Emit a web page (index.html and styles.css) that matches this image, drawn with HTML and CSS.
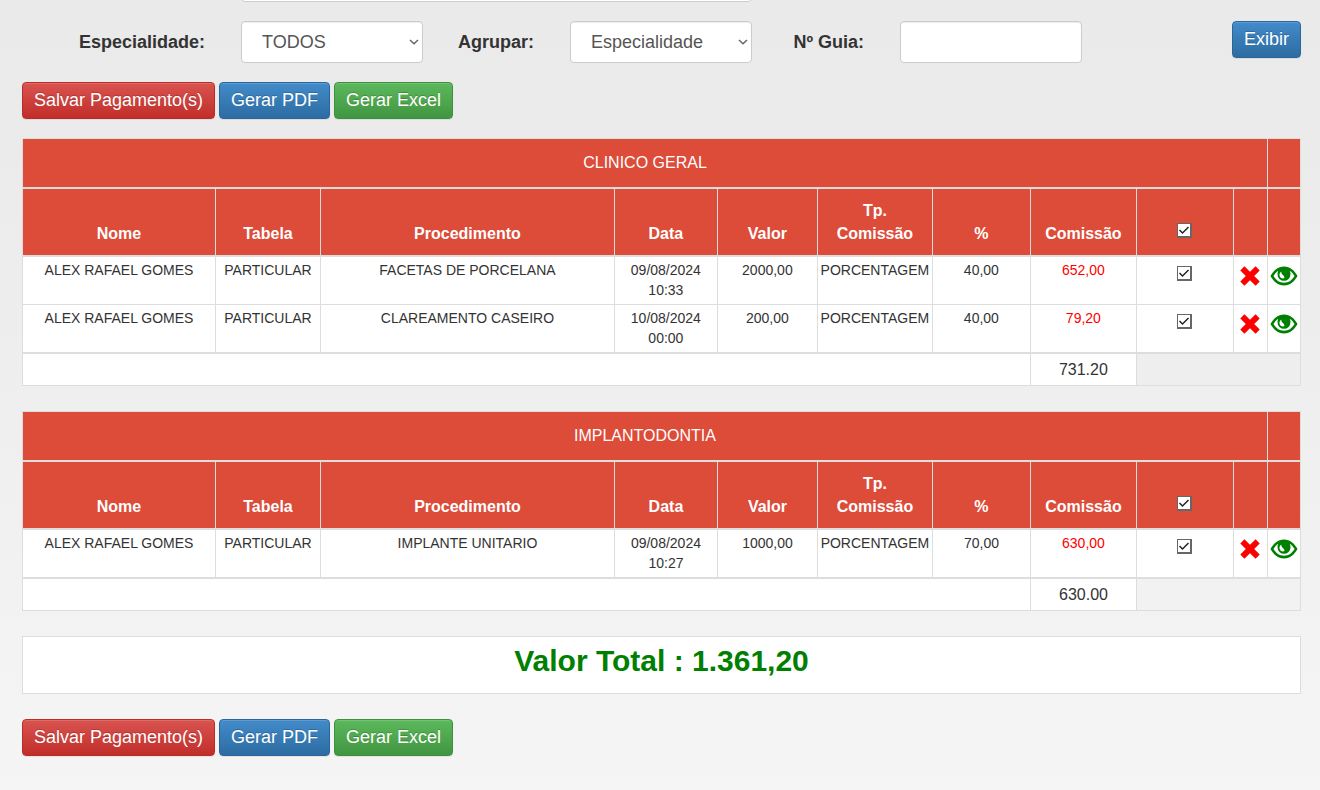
FILE: index.html
```
<!DOCTYPE html>
<html lang="pt-BR">
<head>
<meta charset="utf-8">
<title>Pagamento de Comissões</title>
<link rel="stylesheet" href="styles.css">
</head>
<body>
<svg class="sprite" aria-hidden="true">
  <symbol id="icon-remove" viewBox="0 0 20 20">
    <path d="M4.400.3 10 5.800 15.600.3 19.700 4.400 14.200 10 19.700 15.600 15.600 19.700 10 14.200 4.400 19.700.3 15.600 5.800 10 .3 4.400Z"/>
  </symbol>
  <symbol id="icon-eye" viewBox="0 0 28 20">
    <path fill-rule="evenodd" d="M14 .5C20 .5 24.500 4.500 27.500 10 24.500 15.500 20 19.500 14 19.500S3.500 15.500.5 10C3.500 4.500 8 .5 14 .5ZM8.300 4.800C6.300 6 4.800 7.800 3.500 10c2.500 4.200 6 6.700 10.500 6.700S22 14.200 24.500 10c-1.300-2.200-2.800-4-4.800-5.200a6.500 6.500 0 0 1 .8 3.500 6.500 6.500 0 0 1-13 0 6.500 6.500 0 0 1 .8-3.500ZM11.300 5.500c-2.100 1.500-2.400 4.200-.8 5.900 1 1.100 2.600 1.400 3.900.7.200-1.300-.4-2.200-1.500-3.100-1.200-.9-1.700-1.900-1.600-3.500Z"/>
  </symbol>
</svg>

<main class="page">
  <form class="filters">
    <input class="field field-wide" type="text" aria-label="Profissional">

    <label class="filter-label filter-first" for="especialidade">Especialidade:</label>
    <select class="field" id="especialidade"><option>TODOS</option></select>

    <label class="filter-label" for="agrupar">Agrupar:</label>
    <select class="field" id="agrupar"><option>Especialidade</option></select>

    <label class="filter-label" for="guia">Nº Guia:</label>
    <input class="field" type="text" id="guia">

    <button class="btn btn-primary btn-show" type="button">Exibir</button>
  </form>

  <div class="actions">
    <button class="btn btn-danger" type="button">Salvar Pagamento(s)</button>
    <button class="btn btn-primary" type="button">Gerar PDF</button>
    <button class="btn btn-success" type="button">Gerar Excel</button>
  </div>

  <table class="grid">
    <colgroup>
      <col class="c-name"><col class="c-plan"><col><col class="c-date"><col class="c-value"><col class="c-type"><col class="c-percent"><col class="c-fee"><col class="c-check"><col class="c-remove"><col class="c-view">
    </colgroup>
    <thead>
      <tr class="group"><td colspan="10">CLINICO GERAL</td><td></td></tr>
      <tr class="heads">
        <th>Nome</th><th>Tabela</th><th>Procedimento</th><th>Data</th><th>Valor</th><th>Tp. Comissão</th><th>%</th><th>Comissão</th>
        <th><input class="check" type="checkbox" checked aria-label="Selecionar todos"></th><th></th><th></th>
      </tr>
    </thead>
    <tbody>
      <tr>
        <td>ALEX RAFAEL GOMES</td><td>PARTICULAR</td><td>FACETAS DE PORCELANA</td><td>09/08/2024 10:33</td><td>2000,00</td><td>PORCENTAGEM</td><td>40,00</td><td class="fee">652,00</td>
        <td><input class="check" type="checkbox" checked aria-label="Selecionar"></td>
        <td><button class="icon icon-remove" type="button" aria-label="Excluir"><svg width="20" height="20"><use href="#icon-remove"/></svg></button></td>
        <td><button class="icon icon-view" type="button" aria-label="Visualizar"><svg width="28" height="20"><use href="#icon-eye"/></svg></button></td>
      </tr>
      <tr>
        <td>ALEX RAFAEL GOMES</td><td>PARTICULAR</td><td>CLAREAMENTO CASEIRO</td><td>10/08/2024 00:00</td><td>200,00</td><td>PORCENTAGEM</td><td>40,00</td><td class="fee">79,20</td>
        <td><input class="check" type="checkbox" checked aria-label="Selecionar"></td>
        <td><button class="icon icon-remove" type="button" aria-label="Excluir"><svg width="20" height="20"><use href="#icon-remove"/></svg></button></td>
        <td><button class="icon icon-view" type="button" aria-label="Visualizar"><svg width="28" height="20"><use href="#icon-eye"/></svg></button></td>
      </tr>
    </tbody>
    <tfoot>
      <tr><td colspan="7"></td><td>731.20</td><td class="blank" colspan="3"></td></tr>
    </tfoot>
  </table>

  <table class="grid">
    <colgroup>
      <col class="c-name"><col class="c-plan"><col><col class="c-date"><col class="c-value"><col class="c-type"><col class="c-percent"><col class="c-fee"><col class="c-check"><col class="c-remove"><col class="c-view">
    </colgroup>
    <thead>
      <tr class="group"><td colspan="10">IMPLANTODONTIA</td><td></td></tr>
      <tr class="heads">
        <th>Nome</th><th>Tabela</th><th>Procedimento</th><th>Data</th><th>Valor</th><th>Tp. Comissão</th><th>%</th><th>Comissão</th>
        <th><input class="check" type="checkbox" checked aria-label="Selecionar todos"></th><th></th><th></th>
      </tr>
    </thead>
    <tbody>
      <tr>
        <td>ALEX RAFAEL GOMES</td><td>PARTICULAR</td><td>IMPLANTE UNITARIO</td><td>09/08/2024 10:27</td><td>1000,00</td><td>PORCENTAGEM</td><td>70,00</td><td class="fee">630,00</td>
        <td><input class="check" type="checkbox" checked aria-label="Selecionar"></td>
        <td><button class="icon icon-remove" type="button" aria-label="Excluir"><svg width="20" height="20"><use href="#icon-remove"/></svg></button></td>
        <td><button class="icon icon-view" type="button" aria-label="Visualizar"><svg width="28" height="20"><use href="#icon-eye"/></svg></button></td>
      </tr>
    </tbody>
    <tfoot>
      <tr><td colspan="7"></td><td>630.00</td><td class="blank" colspan="3"></td></tr>
    </tfoot>
  </table>

  <p class="grand-total">Valor Total : 1.361,20</p>

  <div class="actions">
    <button class="btn btn-danger" type="button">Salvar Pagamento(s)</button>
    <button class="btn btn-primary" type="button">Gerar PDF</button>
    <button class="btn btn-success" type="button">Gerar Excel</button>
  </div>
</main>
</body>
</html>
```

FILE: styles.css
```
* { box-sizing: border-box; }

html { min-height: 100%; background: linear-gradient(#eaeaea, #ebebeb 20%, #f5f5f5); }

body {
  margin: 0;
  font-family: "Liberation Sans", Arial, sans-serif;
  font-size: 14px;
  color: #333;
}

.sprite { display: none; }

.page { padding: 0 19px 15px 22px; overflow: hidden; }

/* Filters */
.filters {
  display: grid;
  grid-template-columns: 219fr 182fr 147fr 182fr 148fr 182fr 219fr;
  row-gap: 19px;
  margin-top: -40px;
}

.field {
  width: 100%;
  height: 42px;
  padding: 6px 12px;
  font-family: inherit;
  font-size: 18px;
  color: #555;
  background-color: #fff;
  border: 1px solid #ccc;
  border-radius: 4px;
  box-shadow: inset 0 1px 1px rgba(0, 0, 0, .075);
}

select.field {
  appearance: none;
  padding: 6px 20px;
  background-image: url("data:image/svg+xml,%3Csvg xmlns='http://www.w3.org/2000/svg' viewBox='0 0 10 6'%3E%3Cpath d='M1 1 5 4.800 9 1' fill='none' stroke='%23666' stroke-width='1.500'/%3E%3C/svg%3E");
  background-repeat: no-repeat;
  background-position: right 3px center;
  background-size: 10px 6px;
}

.field-wide { grid-column: 2 / 5; }

.filter-label {
  align-self: center;
  padding-right: 36px;
  text-align: right;
  font-size: 18px;
  font-weight: bold;
}

.filter-first { grid-column-start: 1; }

.btn-show { justify-self: end; align-self: start; }

/* Buttons */
.btn {
  padding: 6px 11px;
  font-family: inherit;
  font-size: 18px;
  line-height: 23px;
  color: #fff;
  text-shadow: 0 -1px 0 rgba(0, 0, 0, .2);
  border: 1px solid;
  border-radius: 4px;
  box-shadow: inset 0 1px 0 rgba(255, 255, 255, .15), 0 1px 1px rgba(0, 0, 0, .075);
}

.btn-danger { background: linear-gradient(#d9534f, #c12e2a); border-color: #b92c28; }
.btn-primary { background: linear-gradient(#428bca, #2d6ca2); border-color: #2b669a; }
.btn-success { background: linear-gradient(#5cb85c, #419641); border-color: #3e8f3e; }

.actions { display: flex; gap: 4px; margin: 19px 0; }

/* Commission tables */
.grid {
  width: 100%;
  margin-bottom: 25px;
  table-layout: fixed;
  border-collapse: collapse;
  text-align: center;
  line-height: 20px;
}

.c-name { width: 193px; }
.c-plan { width: 105px; }
.c-date { width: 103px; }
.c-value { width: 100px; }
.c-type { width: 115px; }
.c-percent { width: 98px; }
.c-fee { width: 106px; }
.c-check { width: 97px; }
.c-remove { width: 34px; }
.c-view { width: 33px; }

.grid th,
.grid td { border: 1px solid #ddd; background: #fff; }

.grid thead th,
.grid thead td {
  color: #fff;
  background: #dd4b39;
  border-bottom-width: 2px;
  font-size: 16px;
  line-height: 23px;
}

.group td { height: 49px; padding: 0 8px 1px; }
.heads th { height: 68px; padding: 10px 8px; vertical-align: bottom; }

.grid tbody td { height: 48px; padding: 3px 2px 4px; vertical-align: top; }
.grid tbody td:nth-child(4) { padding-right: 12px; padding-left: 12px; }
.grid .fee { color: #f00; }

.grid tfoot td { height: 33px; padding: 2px 0 0; border-top-width: 2px; font-size: 16px; }
.grid tfoot .blank { background: transparent; }

/* Row controls */
.check {
  appearance: none;
  width: 15px;
  height: 15px;
  margin: 6px 0 0;
  vertical-align: top;
  border: 1px solid #666;
  border-right-width: 2px;
  border-bottom-width: 2px;
  background: #fff;
}

.check:checked {
  background-image: url("data:image/svg+xml,%3Csvg xmlns='http://www.w3.org/2000/svg' viewBox='0 0 12 12'%3E%3Cpath d='M1.500 6 4.500 9 10.500 3' fill='none' stroke='%23222' stroke-width='1.500'/%3E%3C/svg%3E");
}

.heads .check { margin: 0 0 7px; vertical-align: bottom; }

.icon {
  display: flex;
  justify-content: center;
  width: 100%;
  margin: 6px 0 0;
  padding: 0;
  background: none;
  border: 0;
  fill: currentColor;
}

.icon-remove { color: #f00; }
.icon-view { color: #008000; }

.grand-total {
  margin: 0 0 25px;
  padding: 7px 8px 15px;
  font-size: 30px;
  font-weight: bold;
  line-height: 34px;
  text-align: center;
  color: #008000;
  background: #fff;
  border: 1px solid #ddd;
}
```
